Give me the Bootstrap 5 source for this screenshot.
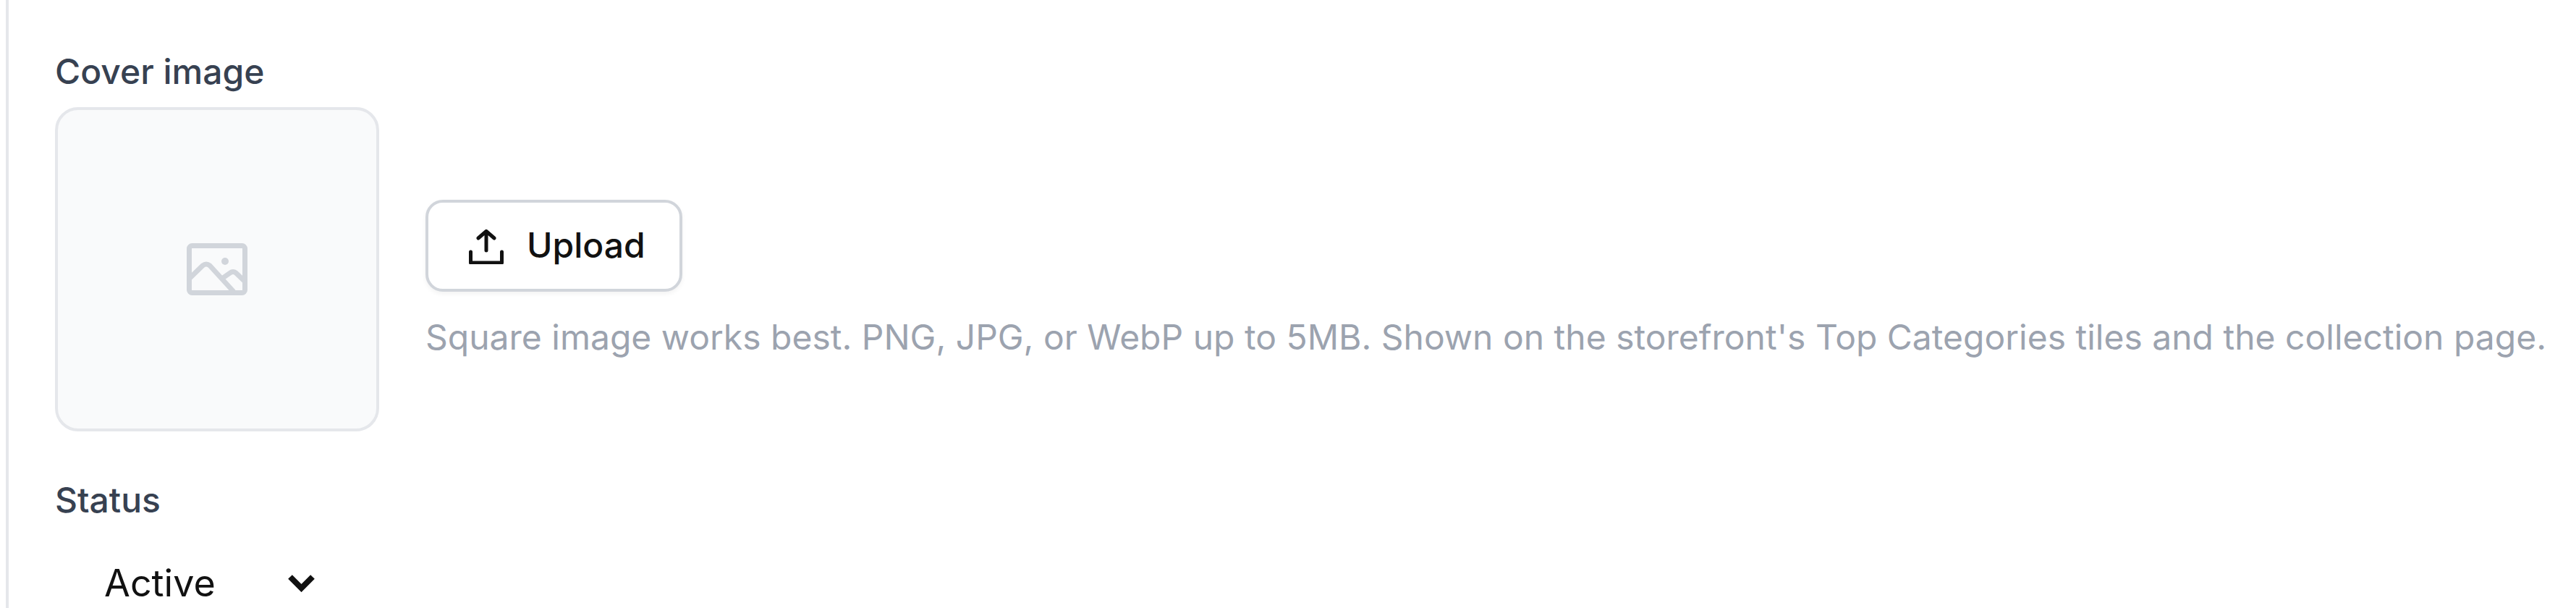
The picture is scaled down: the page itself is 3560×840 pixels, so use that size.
<!DOCTYPE html>
<html lang="en"><head><meta charset="utf-8">
<title>Cover image</title>
<link rel="stylesheet" href="https://cdn.jsdelivr.net/npm/bootstrap@5.3.0/dist/css/bootstrap.min.css">
<style>
html,body{height:840px;overflow:hidden}
body{background:#fff;font-family:Inter,"Liberation Sans",sans-serif;color:#111}
.pane{height:840px;margin-left:8px;border-left:4px solid #e5e7eb;padding:67px 0 0 64px;overflow:hidden}
.fld-label{display:block;font-size:48px;line-height:64px;font-weight:500;color:#374151;margin:0 0 17px}
.status-label{margin:63px 0 47px}
.cover-box{width:448px;height:448px;background:#f9fafb;border:4px solid #e5e7eb;border-radius:32px;flex:none}
.cover-box svg{width:84px;height:72px;color:#d1d5db}
.side-col{padding:128px 0 0 64px}
.upload-btn{--bs-btn-font-size:48px;--bs-btn-font-weight:500;--bs-btn-line-height:64px;--bs-btn-padding-x:48px;--bs-btn-padding-y:27.5px;--bs-btn-border-width:4px;--bs-btn-border-color:#d1d5db;--bs-btn-border-radius:24px;--bs-btn-color:#111;--bs-btn-bg:#fff;--bs-btn-hover-color:#111;--bs-btn-hover-bg:#f9fafb;--bs-btn-hover-border-color:#d1d5db;gap:32px;box-shadow:0 3px 6px rgba(0,0,0,.05);width:355px;height:127px;padding-left:56px;padding-right:0;white-space:nowrap}
.upload-btn svg{width:48px;height:48px;flex:none;margin-top:2px}
.upload-label{margin-top:-2px}
.hint-text{font-size:48px;line-height:64px;color:#9ca3af;margin:31px 0 0;white-space:nowrap}
.status-sel{width:384px;height:72px;font-size:52px;line-height:72px;color:#111;padding:0 0 0 68px;border:0;border-radius:0;box-shadow:none;background-color:transparent;background-image:url("data:image/svg+xml,%3csvg xmlns='http://www.w3.org/2000/svg' viewBox='0 0 37 24'%3e%3cpath fill='none' stroke='%23111' stroke-width='8' d='M3 3l15.5 15.5L34 3'/%3e%3c/svg%3e");background-size:37px 24px;background-position:right 25px center;font-family:inherit}
</style></head><body>
<main class="pane">
  <label class="fld-label" for="cover-up">Cover image</label>
  <div class="d-flex align-items-start">
    <div class="cover-box d-flex align-items-center justify-content-center">
      <svg viewBox="0 0 84 72" fill="none" stroke="currentColor" stroke-width="7" stroke-linecap="round" stroke-linejoin="round"><rect x="3.5" y="3.5" width="77" height="65" rx="4"/><path d="M3.5 49 22 31q5-4 10 0l32 35M50 48l10-7q4-3 8 0l12.5 12"/><circle cx="53" cy="25" r="5" fill="currentColor" stroke="none"/></svg>
    </div>
    <div class="side-col d-flex flex-column align-items-start">
      <button type="button" id="cover-up" class="btn upload-btn d-inline-flex align-items-center">
        <svg viewBox="0 0 48 48" fill="none" stroke="currentColor" stroke-width="5" stroke-linecap="round" stroke-linejoin="round"><path d="M2.5 31v15h43V31M24 29V3M13 12 24 2.5 35 12"/></svg>
        <span class="upload-label">Upload</span>
      </button>
      <p class="hint-text">Square image works best. PNG, JPG, or WebP up to 5MB. Shown on the storefront's Top Categories tiles and the collection page.</p>
    </div>
  </div>
  <label class="fld-label status-label" for="status-sel">Status</label>
  <select id="status-sel" class="form-select status-sel"><option>Active</option><option>Draft</option></select>
</main>
<script src="https://cdn.jsdelivr.net/npm/bootstrap@5.3.0/dist/js/bootstrap.bundle.min.js"></script>
</body></html>
